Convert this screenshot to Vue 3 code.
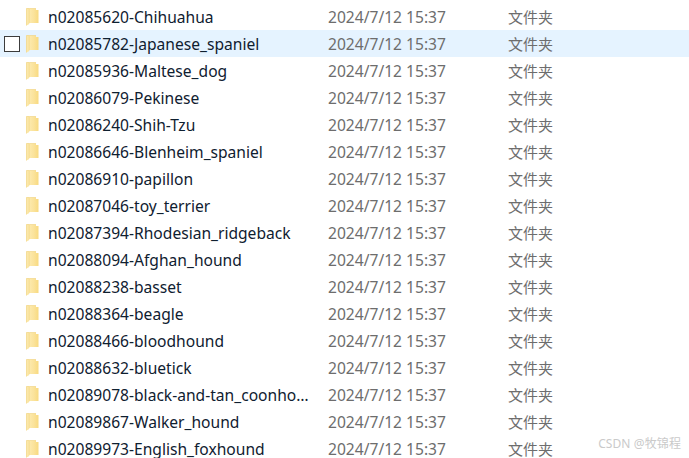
<template>
  <div class="file-list">
    <div
      v-for="(name, i) in folders"
      :key="name"
      class="file-row"
      :class="{ hovered: i === 1 }"
    >
      <span class="check-cell"><span v-if="i === 1" class="check-box"></span></span>
      <svg class="folder-icon" width="13" height="18" viewBox="0 0 13 18">
        <defs>
          <linearGradient id="folderFront" x1="0" y1="0" x2="1" y2="0">
            <stop offset="0" stop-color="#fdeeb8" />
            <stop offset="0.6" stop-color="#fbe39c" />
            <stop offset="1" stop-color="#f8da80" />
          </linearGradient>
        </defs>
        <path d="M0.5 0.5 L10 0.5 L10 2 L12.5 2 L12.5 15 L3 15 L3 16 L0.5 17.5 Z" fill="url(#folderFront)" />
        <path d="M0.5 0.5 L3 0.5 L3 16 L0.5 17.5 Z" fill="#fbe7a8" />
        <path d="M3.2 1 L3.2 15.5" fill="none" stroke="#f4d47c" stroke-width="0.6" />
        <path d="M0.5 17.5 L0.5 0.5 L10 0.5" fill="none" stroke="#f0d27e" stroke-width="0.6" />
      </svg>
      <span class="file-name">{{ name }}</span>
      <span class="file-date">2024/7/12 15:37</span>
      <span class="file-type">文件夹</span>
    </div>
    <div class="watermark">CSDN @牧锦程</div>
  </div>
</template>

<script setup>
const folders = [
  'n02085620-Chihuahua',
  'n02085782-Japanese_spaniel',
  'n02085936-Maltese_dog',
  'n02086079-Pekinese',
  'n02086240-Shih-Tzu',
  'n02086646-Blenheim_spaniel',
  'n02086910-papillon',
  'n02087046-toy_terrier',
  'n02087394-Rhodesian_ridgeback',
  'n02088094-Afghan_hound',
  'n02088238-basset',
  'n02088364-beagle',
  'n02088466-bloodhound',
  'n02088632-bluetick',
  'n02089078-black-and-tan_coonhound',
  'n02089867-Walker_hound',
  'n02089973-English_foxhound'
]
</script>

<style scoped>
.file-list {
  position: relative;
  width: 689px;
  height: 458px;
  padding-top: 3px;
  box-sizing: border-box;
  overflow: hidden;
  background: #fff;
  font-family: "Noto Sans", "Noto Sans CJK SC", sans-serif;
  font-size: 15.6px;
  line-height: 20px;
}
.file-row {
  display: flex;
  align-items: center;
  height: 27px;
}
.hovered {
  background: #e5f3ff;
}
.check-cell {
  display: flex;
  padding-left: 4px;
  box-sizing: border-box;
  width: 26px;
  flex: none;
}
.check-box {
  width: 16px;
  height: 16px;
  box-sizing: border-box;
  border: 1px solid #3c3c3c;
  background: #fff;
}
.folder-icon {
  flex: none;
  margin-right: 9px;
}
.file-name {
  width: 280px;
  padding-right: 16px;
  box-sizing: border-box;
  flex: none;
  color: #0f2030;
  white-space: nowrap;
  overflow: hidden;
  text-overflow: ellipsis;
}
.file-date {
  width: 180px;
  flex: none;
  color: #6d6d6d;
}
.file-type {
  font-size: 15px;
  color: #6d6d6d;
}
.watermark {
  position: absolute;
  right: 8px;
  bottom: 4px;
  font-size: 12px;
  letter-spacing: 0.1px;
  color: #cacaca;
}
</style>
